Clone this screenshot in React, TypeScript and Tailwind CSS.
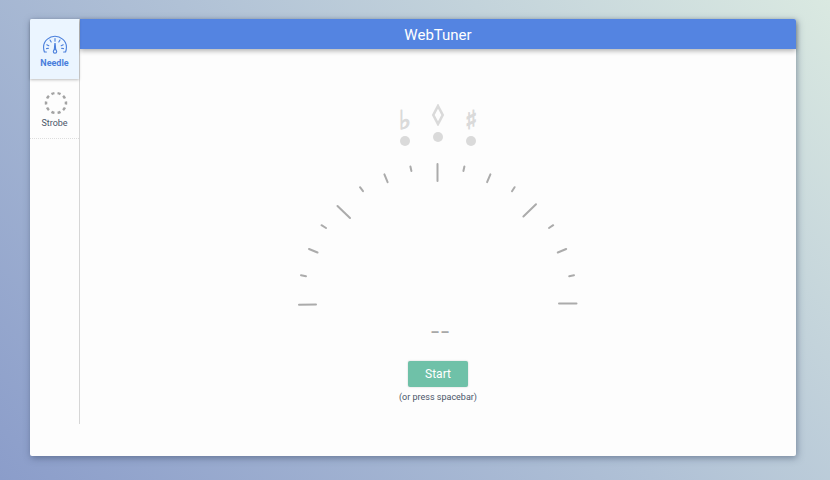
import { useState } from "react";

type Tick = [number, number, number, number];

const TICKS: Tick[] = [
  [2, 142.7, 19, 142.5],
  [4, 113.3, 9, 114.3],
  [12, 87, 20.5, 90.5],
  [24.5, 63.2, 29, 66],
  [40.5, 44, 53, 56],
  [63, 25.2, 66, 29.2],
  [87.4, 12.4, 90.6, 20.2],
  [113.4, 4.5, 114.4, 9],
  [140.5, 2, 140.5, 19],
  [167.4, 4.5, 166.4, 9],
  [193.4, 12.4, 190.1, 20.2],
  [217.6, 25.2, 215, 29.2],
  [239, 42.2, 226.4, 54.5],
  [256.2, 63.2, 252, 66],
  [269.2, 87, 260.8, 90.5],
  [277, 113.3, 272.2, 114.3],
  [279.5, 141.6, 262, 141.6],
];

function NeedleIcon() {
  return (
    <svg viewBox="0 0 26 20" className="h-5 w-[26px]" fill="none" stroke="currentColor" strokeWidth="1.1" strokeLinecap="round" aria-hidden="true">
      <path d="M4.400 17H2.400C.8 12 2 7 5.400 4.200A11.200 11.200 0 0 1 13 1.300c3 0 5.400 1 7.600 2.900C24 7 25.200 12 23.600 17h-2" />
      <path d="M13 3.600v2.600M8 5l1.200 2M18 5l-1.200 2M4.800 9.800l2 1M21.200 9.800l-2 1M4.500 13.600l2-.3M21.500 13.600l-2-.3" />
      <path d="M12.900 8.500l-.6 6h1.400l-.6-6z" fill="currentColor" />
      <circle cx="13" cy="16.500" r="1.700" fill="#ebf5ff" />
    </svg>
  );
}

function StrobeIcon() {
  return (
    <svg viewBox="0 0 24 24" className="ml-[2px] size-6" fill="none" stroke="#a3a3a3" strokeWidth="2.500" aria-hidden="true">
      <circle cx="12" cy="12" r="10" pathLength="100" strokeDasharray="5 5" transform="rotate(-9 12 12)" />
    </svg>
  );
}

function Gauge() {
  return (
    <svg viewBox="0 0 282 144" className="h-36 w-[282px]" stroke="#ababab" strokeWidth="2" strokeLinecap="round" role="img" aria-label="Tuning gauge">
      {TICKS.map(([x1, y1, x2, y2]) => (
        <line key={`${x1}-${y1}`} x1={x1} y1={y1} x2={x2} y2={y2} />
      ))}
    </svg>
  );
}

function Dot() {
  return <span className="size-[10px] rounded-full bg-[#dadada]" />;
}

export default function App() {
  const [mode, setMode] = useState("needle");
  const tab = "relative flex h-[60px] w-full flex-col items-center text-[9px] leading-3";
  const active = "z-10 bg-[#ebf5ff] font-bold text-[#4a7fdc] shadow-[0_1px_3px_rgba(0,0,0,0.25)]";
  const idle = "border-b border-dotted border-[#dddddd] font-normal text-[#4a5568]";
  const accidental = "font-['DejaVu_Sans',sans-serif] text-[26px] leading-5 font-bold [-webkit-text-stroke:1px_#dadada]";

  return (
    <div className="flex min-h-screen bg-linear-[45deg] from-[#8b9dca] via-[#b0c1d6] to-[#dae9e1] pt-[19px] pr-[34px] pb-6 pl-[30px] font-['Roboto','Liberation_Sans',sans-serif] text-[#4a5568]">
      <div className="flex flex-1 rounded-[2px] bg-[#fdfdfd] shadow-[1px_2px_7px_rgba(50,65,95,0.5)]">
        <nav className="mb-8 w-[50px] shrink-0 border-r border-[#d6d6d6]">
          <button type="button" aria-pressed={mode === "needle"} onClick={() => setMode("needle")} className={`${tab} rounded-tl-[2px] pt-4 ${mode === "needle" ? active : idle}`}>
            <NeedleIcon />
            <span className="mt-[2px]">Needle</span>
          </button>
          <button type="button" aria-pressed={mode === "strobe"} onClick={() => setMode("strobe")} className={`${tab} pt-3 ${mode === "strobe" ? active : idle}`}>
            <StrobeIcon />
            <span className="mt-[2px]">Strobe</span>
          </button>
        </nav>
        <div className="flex min-w-0 flex-1 flex-col">
          <header className="flex h-[30px] items-center justify-center rounded-tr-[2px] bg-[#5484e1] text-white shadow-[0_2px_5px_rgba(0,0,0,0.3)]">
            <h1 className="pt-px text-[15px] leading-5">WebTuner</h1>
          </header>
          <main className="flex flex-1 flex-col items-center pt-[55px]">
            <div className="flex items-start gap-[13px] text-[#dadada]">
              <div className="flex w-5 flex-col items-center pt-[6px]">
                <span className={accidental}>♭</span>
                <span className="mt-[6px] flex"><Dot /></span>
              </div>
              <div className="flex w-5 flex-col items-center">
                <svg viewBox="0 0 14 22" className="h-[22px] w-[14px]" fill="none" stroke="currentColor" strokeWidth="2.600" aria-hidden="true">
                  <path d="M7 2l4.700 9L7 20 2.300 11z" />
                </svg>
                <span className="mt-[6px] flex"><Dot /></span>
              </div>
              <div className="flex w-5 flex-col items-center pt-[6px]">
                <span className={accidental}>♯</span>
                <span className="mt-[6px] flex"><Dot /></span>
              </div>
            </div>
            <div className="mt-4 flex"><Gauge /></div>
            <output className="mt-[13px] pl-1 font-['Inter','Liberation_Sans',sans-serif] text-[22px] leading-6 text-[#a8a8a8]">--</output>
            <button type="button" className="mt-[18px] h-[26px] w-[60px] rounded-[2px] bg-[#6fc1a8] text-[12px] leading-4 text-white shadow-[0_0_2px_rgba(0,0,0,0.2)]">
              Start
            </button>
            <p className="mt-1 text-[9px] leading-3">(or press spacebar)</p>
          </main>
        </div>
      </div>
    </div>
  );
}
